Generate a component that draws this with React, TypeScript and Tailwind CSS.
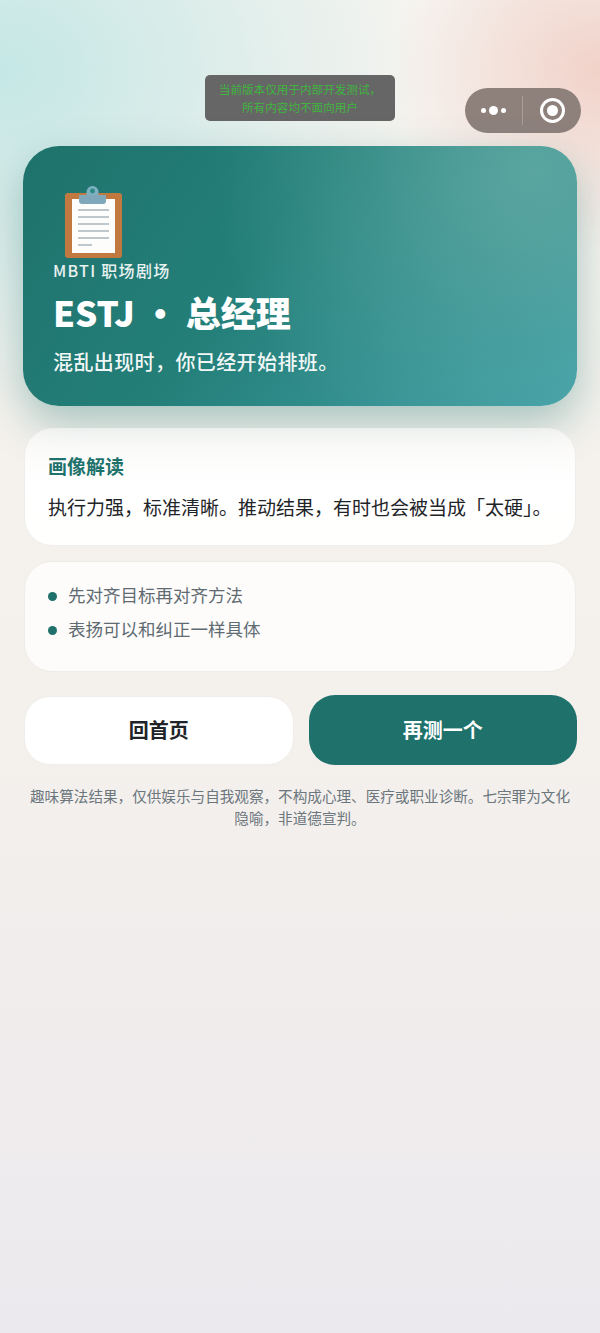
const bullets = ['先对齐目标再对齐方法', '表扬可以和纠正一样具体'];

function ClipboardIcon() {
  return (
    <svg width="57" height="72" viewBox="0 0 57 72" className="block">
      <rect x="0" y="7" width="57" height="65" rx="3" fill="#c1793f" />
      <rect x="7" y="13" width="43" height="54" fill="#fdfdfb" />
      <path d="M27.5 0a6 6 0 0 1 6 6v4h-12v-4a6 6 0 0 1 6-6z" fill="#7fb0c2" />
      <circle cx="27.5" cy="5" r="2.4" fill="#2b8a83" />
      <path d="M14 9h27v6a3 3 0 0 1-3 3h-21a3 3 0 0 1-3-3z" fill="#7fa9bb" />
      <g stroke="#a9b6bd" strokeWidth="1.6">
        <path d="M13 24h31M13 31h31M13 38h31M13 45h31M13 52h31M13 59h14" />
      </g>
    </svg>
  );
}

function CapsuleMenu() {
  return (
    <div className="absolute left-[465px] top-[88px] flex h-[45px] w-[116px] items-center rounded-full bg-[#8e817c]">
      <div className="flex w-[57px] items-center justify-center gap-[3px]">
        <span className="h-[5px] w-[5px] rounded-full bg-white" />
        <span className="h-[9px] w-[9px] rounded-full bg-white" />
        <span className="h-[5px] w-[5px] rounded-full bg-white" />
      </div>
      <div className="h-[29px] w-px bg-[#a89d98]" />
      <div className="flex flex-1 items-center justify-center">
        <div className="flex h-[25px] w-[25px] items-center justify-center rounded-full border-[3px] border-white">
          <span className="h-[11px] w-[11px] rounded-full bg-white" />
        </div>
      </div>
    </div>
  );
}

export default function App() {
  return (
    <div className="relative h-[1333px] w-[600px] overflow-hidden bg-[linear-gradient(180deg,#f6f4f0_0%,#f4f0ec_55%,#ece9ee_100%)] px-6 pt-[146px] font-['Noto_Sans_CJK_SC','Noto_Sans',sans-serif]">
      <div className="absolute inset-x-0 top-0 h-[460px] bg-[radial-gradient(ellipse_430px_340px_at_0%_70px,#c4e7e5_0%,rgba(192,231,229,0)_100%)]" />
      <div className="absolute inset-x-0 top-0 h-[300px] bg-[radial-gradient(ellipse_210px_180px_at_100%_70px,#f1d2c9_0%,rgba(241,210,201,0)_100%)]" />

      <div className="absolute left-[205px] top-[75px] flex h-[46px] w-[190px] flex-col items-center justify-center rounded-[5px] bg-[#666666] text-center text-[11.6px] leading-[18px] text-[#3fb53f]">
        <span>当前版本仅用于内部开发测试，</span>
        <span>所有内容均不面向用户</span>
      </div>
      <CapsuleMenu />

      <div className="relative -mx-px flex h-[260px] flex-col rounded-[36px] bg-[radial-gradient(circle_320px_at_92%_10%,rgba(100,170,163,0.8)_0%,rgba(96,168,162,0.38)_50%,rgba(90,169,164,0)_100%),linear-gradient(125deg,#1f726c_0%,#247f79_42%,#43a3aa_100%)] pl-[30px] pt-[40px] text-white shadow-[0_18px_44px_rgba(31,114,108,0.36)]">
        <div className="pl-[12px]">
          <ClipboardIcon />
        </div>
        <div className="text-[16px] font-medium leading-[24px] tracking-[1.3px] text-white/90">MBTI 职场剧场</div>
        <div className="mt-[5px] whitespace-nowrap text-[35px] font-black leading-[50px]">ESTJ • 总经理</div>
        <div className="mt-[10px] text-[20px] font-medium leading-[30px] tracking-[0.4px] text-white/95">混乱出现时，你已经开始排班。</div>
      </div>

      <div className="relative mt-[22px] h-[118px] rounded-[28px] border border-[#f0eeea] bg-[linear-gradient(180deg,rgba(255,255,255,0.55)_0%,#ffffff_45%,#fffffe_100%)] pl-[23px] pt-[22px]">
        <div className="text-[19px] font-bold leading-[30px] text-[#1f726c]">画像解读</div>
        <div className="mt-[10px] whitespace-nowrap text-[19px] leading-[32px] text-[#1e2428]">执行力强，标准清晰。推动结果，有时也会被当成「太硬」。</div>
      </div>

      <div className="relative mt-[15px] flex h-[111px] flex-col gap-[6px] rounded-[28px] border border-[#eeece8] bg-white/80 pl-[23px] pt-[19px]">
        {bullets.map((item) => (
          <div key={item} className="flex h-[28px] items-center gap-[11px] text-[17.5px] leading-[28px] text-[#5f6b72]">
            <span className="mt-[3px] h-[9px] w-[9px] rounded-full bg-[#1f726c]" />
            {item}
          </div>
        ))}
      </div>

      <div className="relative mt-[23px] flex items-center gap-[15px]">
        <button className="h-[69px] w-[270px] rounded-[26px] border border-[#f0eeea] bg-white text-[20px] font-bold text-[#1e2428]">回首页</button>
        <button className="-mr-px h-[70px] w-[269px] rounded-[26px] bg-[#1f726c] text-[20px] font-bold text-white">再测一个</button>
      </div>

      <p className="relative mt-[20px] text-center text-[14.6px] leading-[22px] text-[#6b767d]">
        趣味算法结果，仅供娱乐与自我观察，不构成心理、医疗或职业诊断。七宗罪为文化隐喻，非道德宣判。
      </p>
    </div>
  );
}
